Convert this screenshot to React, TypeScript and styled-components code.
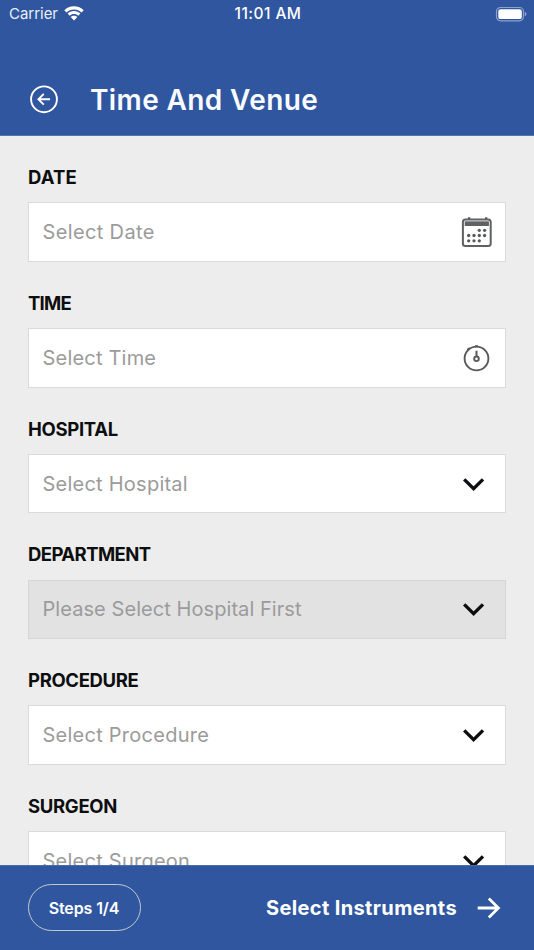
import React from 'react';
import styled, { createGlobalStyle } from 'styled-components';

const GlobalStyle = createGlobalStyle`
  * { box-sizing: border-box; }
  body { margin: 0; font-family: Inter, 'Open Sans', sans-serif; }
`;

const Screen = styled.div`
  display: flex;
  flex-direction: column;
  width: 100%;
  height: 100vh;
  overflow: hidden;
  background: #ededed;
`;

const Header = styled.header`
  flex: none;
  height: 136px;
  background: #2f569f;
  border-bottom: 1px solid #5473ad;
  color: #fff;
`;

const StatusBar = styled.div`
  display: grid;
  grid-template-columns: 1fr auto 1fr;
  align-items: center;
  height: 27px;
  padding: 0 7px 0 9px;
`;

const Carrier = styled.div`
  display: flex;
  align-items: center;
  gap: 6px;
  font-size: 15px;
  letter-spacing: -0.03px;
  color: #e9eef7;
`;

const Clock = styled.div`
  font-size: 15.5px;
  font-weight: 500;
  letter-spacing: 0.45px;
`;

const Battery = styled.div`
  display: flex;
  justify-content: flex-end;
`;

const TitleRow = styled.div`
  display: flex;
  align-items: center;
  height: 40px;
  margin-top: 52px;
  padding-left: 29px;
`;

const IconButton = styled.button`
  display: flex;
  padding: 0;
  border: 0;
  background: none;
  color: inherit;
`;

const Title = styled.h1`
  margin: 1px 0 0 31px;
  font-size: 28px;
  font-weight: 600;
  letter-spacing: 0.38px;
  color: #fafbff;
`;

const Form = styled.main`
  flex: 1;
  min-height: 0;
  overflow: hidden;
  padding: 29px 28px 0;
`;

const Field = styled.section`
  height: 125.75px;
`;

const Label = styled.label<{ $tracking: number }>`
  display: block;
  margin: 0 0 13.3px;
  font-size: 18.5px;
  line-height: 24px;
  font-weight: 700;
  letter-spacing: ${(p) => p.$tracking}px;
  color: #0d0e10;
`;

const Control = styled.div<{ $disabled?: boolean }>`
  display: flex;
  align-items: center;
  justify-content: space-between;
  height: 59.5px;
  padding: 0 12px 0 13.5px;
  border: 1px solid ${(p) => (p.$disabled ? '#d6d6d6' : '#dadada')};
  background: ${(p) => (p.$disabled ? '#e2e2e2' : '#fff')};
`;

const Placeholder = styled.span<{ $tracking: number }>`
  font-size: 20px;
  line-height: 24px;
  letter-spacing: ${(p) => p.$tracking}px;
  color: #9b9b9b;
  white-space: nowrap;
`;

const Footer = styled.footer`
  display: flex;
  flex: none;
  align-items: center;
  justify-content: space-between;
  height: 85px;
  padding: 0 33px 0 28px;
  border-top: 1px solid #4a6cab;
  background: #2f569f;
  color: #fff;
`;

const Steps = styled.div`
  display: flex;
  align-items: center;
  justify-content: center;
  width: 113px;
  height: 47px;
  margin-bottom: 1px;
  padding-right: 1px;
  border: 1.5px solid #c3c8d0;
  border-radius: 24px;
  font-size: 16px;
  font-weight: 600;
  letter-spacing: -0.124px;
`;

const NextButton = styled.button`
  display: flex;
  align-items: center;
  gap: 20px;
  padding: 0;
  border: 0;
  background: none;
  color: inherit;
  font: 700 20px Inter, sans-serif;
  letter-spacing: 0.373px;
`;

const WifiIcon = () => (
  <svg width="20" height="15" viewBox="0 0 20 15" fill="#fff">
    <path d="M10 .3C6.200.3 2.800 1.800.3 4.200l2.200 2.300C4.500 4.600 7.100 3.500 10 3.500s5.500 1.100 7.500 3l2.200-2.300C17.200 1.800 13.800.3 10 .3z" />
    <path d="M10 5.100c-2.500 0-4.700.9-6.400 2.500l2.100 2.200C6.800 8.700 8.300 8.100 10 8.100s3.200.6 4.300 1.700l2.100-2.200c-1.700-1.600-3.900-2.500-6.400-2.500z" />
    <path d="M10 9.700c-1.300 0-2.500.5-3.300 1.300L10 14.500l3.300-3.500c-.8-.8-2-1.300-3.300-1.300z" />
  </svg>
);

const BatteryIcon = () => (
  <svg width="32" height="16" viewBox="0 0 32 16">
    <rect x="1.500" y="1.500" width="27" height="13.300" rx="4" fill="none" stroke="#fff" strokeOpacity=".45" strokeWidth="1.200" />
    <rect x="3.300" y="3.300" width="23.500" height="9.800" rx="2.200" fill="#fff" />
    <path d="M29.800 5.700q1.700.8 1.700 2.300t-1.700 2.300z" fill="#fff" fillOpacity=".5" />
  </svg>
);

const BackIcon = () => (
  <svg width="30" height="30" viewBox="0 0 30 30" fill="none" stroke="#fff" strokeWidth="1.900">
    <circle cx="15" cy="15.300" r="12.900" />
    <path d="M21 15.300H9.500M14.800 9.900l-5.400 5.400 5.400 5.400" />
  </svg>
);

const CalendarIcon = () => (
  <svg width="32" height="31" viewBox="0 0 32 31">
    <path d="M6.900 1.100h2.400M24 1.100h2.400" stroke="#58595b" strokeWidth="1.600" />
    <rect x="1.900" y="2.500" width="27.800" height="26.400" rx="2.500" fill="none" stroke="#5f6062" strokeWidth="2" />
    <path d="M3.700 4.300h24.200v4.700H3.700z" fill="#606163" />
    <g fill="#58595b">
      {[[18.3, 13.3], [23.6, 13.3], [7.7, 18.5], [13, 18.5], [18.3, 18.5], [23.6, 18.5], [7.7, 23.8], [13, 23.8], [18.3, 23.8]].map(
        ([x, y]) => <circle key={`${x}-${y}`} cx={x} cy={y} r="1.650" />,
      )}
    </g>
  </svg>
);

const TimerIcon = () => (
  <svg width="31" height="31" viewBox="0 0 31 31" fill="none" stroke="#58595b">
    <circle cx="14.500" cy="16.500" r="11.900" strokeWidth="1.900" />
    <circle cx="14.500" cy="16.800" r="2.300" strokeWidth="1.900" />
    <path d="M14.500 8.800v5.500M5.200 7.800l2.600-1.600M13 4.200h3" strokeWidth="2" />
  </svg>
);

const ChevronIcon = () => (
  <svg width="37" height="24" viewBox="0 0 37 24" fill="none" stroke="#0d0e10" strokeWidth="3.400">
    <path d="M8.200 7.400l9.400 9.200 9.400-9.200" />
  </svg>
);

const ArrowIcon = () => (
  <svg width="24" height="24" viewBox="0 0 24 24" fill="none" stroke="#fff" strokeWidth="2.800">
    <path d="M.7 12h20.800M11.800 2.500l9.600 9.500-9.600 9.500" />
  </svg>
);

type FieldSpec = {
  label: string;
  tracking: number;
  hint: string;
  hintTracking: number;
  Icon: () => React.ReactElement;
  disabled?: boolean;
};

const fields: FieldSpec[] = [
  { label: 'DATE', tracking: 0.1, hint: 'Select Date', hintTracking: 0.36, Icon: CalendarIcon },
  { label: 'TIME', tracking: -0.75, hint: 'Select Time', hintTracking: 0.2, Icon: TimerIcon },
  { label: 'HOSPITAL', tracking: -0.32, hint: 'Select Hospital', hintTracking: 0.24, Icon: ChevronIcon },
  { label: 'DEPARTMENT', tracking: -0.57, hint: 'Please Select Hospital First', hintTracking: 0.066, Icon: ChevronIcon, disabled: true },
  { label: 'PROCEDURE', tracking: -0.35, hint: 'Select Procedure', hintTracking: 0.25, Icon: ChevronIcon },
  { label: 'SURGEON', tracking: -0.32, hint: 'Select Surgeon', hintTracking: 0.25, Icon: ChevronIcon },
];

export default function App() {
  return (
    <Screen>
      <GlobalStyle />
      <Header>
        <StatusBar>
          <Carrier>
            Carrier
            <WifiIcon />
          </Carrier>
          <Clock>11:01 AM</Clock>
          <Battery>
            <BatteryIcon />
          </Battery>
        </StatusBar>
        <TitleRow>
          <IconButton aria-label="Back">
            <BackIcon />
          </IconButton>
          <Title>Time And Venue</Title>
        </TitleRow>
      </Header>
      <Form>
        {fields.map(({ label, tracking, hint, hintTracking, Icon, disabled }) => (
          <Field key={label}>
            <Label $tracking={tracking}>{label}</Label>
            <Control $disabled={disabled}>
              <Placeholder $tracking={hintTracking}>{hint}</Placeholder>
              <Icon />
            </Control>
          </Field>
        ))}
      </Form>
      <Footer>
        <Steps>Steps 1/4</Steps>
        <NextButton>
          Select Instruments
          <ArrowIcon />
        </NextButton>
      </Footer>
    </Screen>
  );
}
